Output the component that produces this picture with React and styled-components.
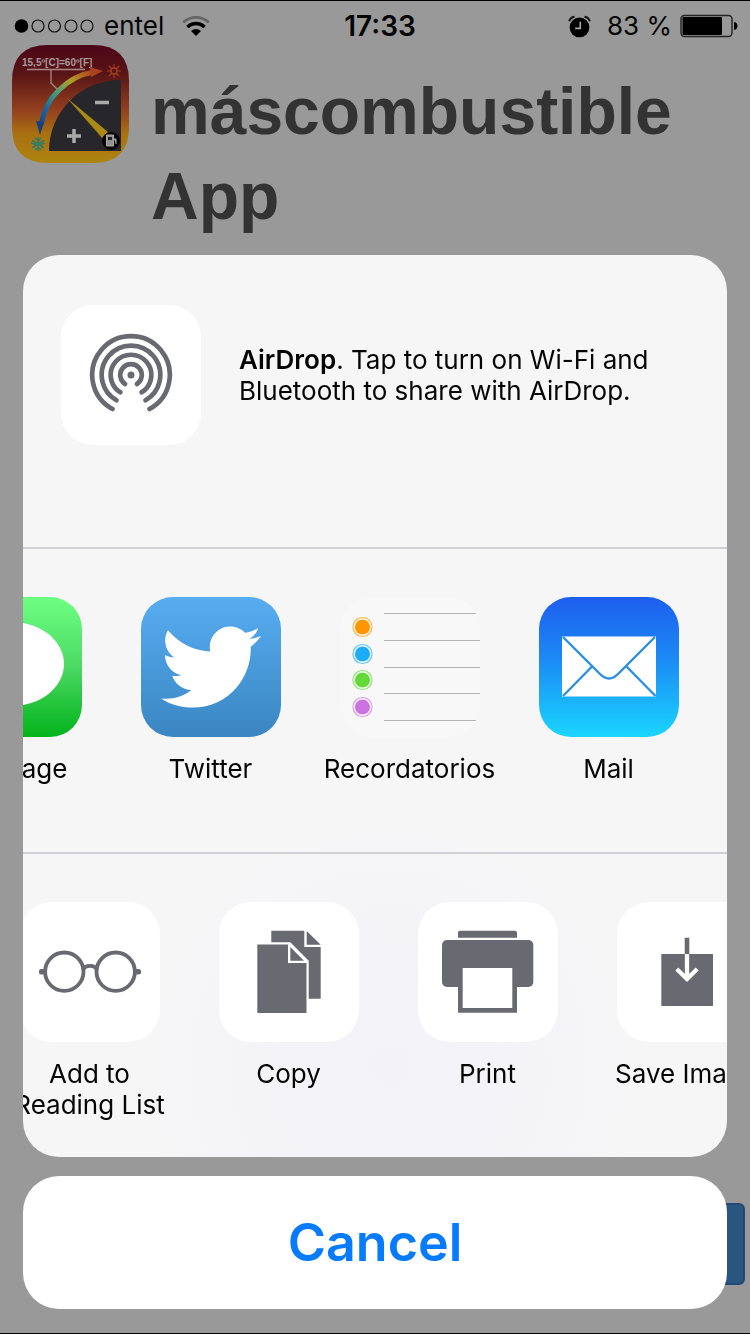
import React from "react";
import styled, { createGlobalStyle } from "styled-components";
import { FaTwitter } from "react-icons/fa";

const INK = "#696972";

const GlobalStyle = createGlobalStyle`
  * { box-sizing: border-box; }
  body {
    margin: 0;
    background: #999;
    color: #050505;
    font-family: Inter, "Liberation Sans", sans-serif;
  }
  button { border: 0; padding: 0; background: none; font: inherit; color: inherit; cursor: pointer; }
  svg { display: block; flex-shrink: 0; }
`;

const Screen = styled.div`
  min-height: 100vh;
  display: flex;
  flex-direction: column;
  background: #999;
  border-top: 1px solid #000;
  border-bottom: 1px solid #000;
`;

const StatusBar = styled.div`
  display: grid;
  grid-template-columns: 41fr auto 40fr;
  align-items: center;
  height: 44px;
  padding: 6px 12px 0 14px;
  font-size: 26px;
  line-height: 32px;
`;

const StatusGroup = styled.div`
  display: flex;
  align-items: center;
  justify-content: ${(p) => (p.$end ? "flex-end" : "flex-start")};
  gap: ${(p) => p.$gap}px;
`;

const Time = styled.time`
  font-size: 28px;
  font-weight: 600;
`;

const PageHeader = styled.header`
  display: flex;
  align-items: flex-start;
  gap: 22px;
  padding: 0 12px;
`;

const Title = styled.h1`
  margin: 24px 0 0;
  font-family: "Liberation Sans", Arial, sans-serif;
  font-size: 66px;
  line-height: 85px;
  font-weight: 700;
  color: #333;
`;

const PageButton = styled.button`
  align-self: flex-end;
  width: 40%;
  height: 82px;
  margin: auto 5px 48px 0;
  border-radius: 6px;
  border: 2px solid #204a72;
  background: #29567f;
`;

const Overlay = styled.div`
  position: fixed;
  inset: 0;
  display: flex;
  flex-direction: column;
  justify-content: flex-end;
  gap: 19px;
  padding: 0 23px 25px;
`;

const Sheet = styled.section`
  overflow: hidden;
  border-radius: 36px;
  background: radial-gradient(circle at 52% 90%, #f2f2f8 0, #f6f6f7 28%);
  font-size: 26px;
  line-height: 31px;
`;

const AirDropButton = styled.button`
  display: flex;
  align-items: center;
  gap: 38px;
  width: 100%;
  padding: 50px 38px 102px;
  text-align: left;
`;

const AirDropText = styled.span`
  max-width: 430px;
`;

const Strong = styled.b`
  font-weight: 600;
`;

const Strip = styled.div`
  overflow: hidden;
  border-top: 2px solid #d0d0d6;
`;

const Track = styled.ul`
  display: flex;
  list-style: none;
  margin: 0 0 0 -${(p) => p.$scrolled}px;
  padding: 48px 0 0;
  min-height: 303px;
`;

const Item = styled.li`
  flex: 0 0 199px;
`;

const ItemButton = styled.button`
  display: flex;
  flex-direction: column;
  align-items: center;
  gap: 16px;
  width: 100%;
`;

const ItemLabel = styled.span`
  max-width: 180px;
  text-align: center;
`;

const Tile = styled.span`
  display: flex;
  align-items: center;
  justify-content: center;
  flex-shrink: 0;
  width: 140px;
  height: 140px;
  border-radius: 32px;
  overflow: hidden;
  background: ${(p) => p.$fill || "#fff"};
`;

const CancelButton = styled.button`
  width: 100%;
  height: 133px;
  border-radius: 36px;
  background: #fff;
  color: #067bfb;
  font-size: 52px;
  font-weight: 600;
`;

const TileArt = ({ children }) => (
  <svg width="140" height="140" viewBox="0 0 140 140" fill="none" aria-hidden="true">
    {children}
  </svg>
);

const SignalDots = () => (
  <svg width="80" height="16" viewBox="0 0 80 16" aria-hidden="true">
    <circle cx="7.5" cy="8" r="6.8" />
    {[24, 40.5, 57, 73].map((x) => (
      <circle key={x} cx={x} cy="8" r="6" fill="none" stroke="#111" strokeWidth="1.2" />
    ))}
  </svg>
);

const Wifi = () => (
  <svg width="28" height="20" viewBox="0 0 28 20" fill="none" aria-hidden="true">
    <path d="M1.2 6.6a18.5 18.5 0 0 1 25.6 0" stroke="#666" strokeWidth="2.8" />
    <path d="M5.4 11a12.4 12.4 0 0 1 17.2 0" stroke="#000" strokeWidth="3.4" />
    <path d="M14 20 9 15a7.4 7.4 0 0 1 10 0Z" fill="#000" />
  </svg>
);

const Alarm = () => (
  <svg width="23" height="23" viewBox="0 0 24 24" fill="none" aria-hidden="true">
    <circle cx="12" cy="13" r="10.300" fill="#000" />
    <path d="M1.2 6.5Q2.5 2.4 6.8 1.8M22.800 6.500Q21.500 2.400 17.200 1.800" stroke="#111" strokeWidth="2" />
    <path d="M12.800 7v7H7.500" stroke="#aaa" strokeWidth="1.700" />
  </svg>
);

const Battery = () => (
  <svg width="58" height="24" viewBox="0 0 58 24" aria-hidden="true">
    <rect x="1" y="1.500" width="51" height="21" rx="3.500" fill="none" stroke="#222" strokeWidth="1.400" />
    <rect x="2.500" y="3" width="39.500" height="18" rx="1" />
    <path d="M54 8q3.500.5 3.500 4T54 16Z" />
  </svg>
);

const AppIcon = () => (
  <svg width="117" height="118" viewBox="0 0 117 118" fill="none" role="img" aria-label="máscombustible">
    <defs>
      <linearGradient id="sky" x1="0" y1="0" x2="0" y2="1">
        <stop offset="0" stopColor="#4c0618" />
        <stop offset="0.250" stopColor="#591516" />
        <stop offset="0.550" stopColor="#93401f" />
        <stop offset="0.750" stopColor="#a97010" />
        <stop offset="1" stopColor="#ad8411" />
      </linearGradient>
      <linearGradient id="arc" x1="28" y1="87" x2="92" y2="27" gradientUnits="userSpaceOnUse">
        <stop offset="0" stopColor="#123f80" />
        <stop offset="0.220" stopColor="#1b62a0" />
        <stop offset="0.420" stopColor="#3d9a83" />
        <stop offset="0.650" stopColor="#b0a02b" />
        <stop offset="0.850" stopColor="#b3541f" />
        <stop offset="1" stopColor="#a83a20" />
      </linearGradient>
    </defs>
    <path d="M0 36Q0 0 36 0H81Q117 0 117 36V82Q117 118 81 118H36Q0 118 0 82Z" fill="url(#sky)" />
    <text x="10" y="21" fontFamily="Liberation Sans, sans-serif" fontSize="10" fontWeight="700" fill="#a9989a">15,5º[C]=60º[F]</text>
    <path d="M15 24.500h58M39 24.500V38l8 8" stroke="#a88a82" strokeWidth="1.300" />
    <path d="M37 106A71 71 0 0 1 109 35V106Z" fill="#27262b" />
    <path d="M29 80Q33 58 47 45 62 30 82 27" stroke="url(#arc)" strokeWidth="5" />
    <path d="M24 76l8 1-4 13Z" fill="#153f7d" />
    <path d="M78 22l13 4-12 6Z" fill="#a64220" />
    <path d="M55 53 96 87 90 93Z" fill="#a98a14" />
    <path d="M55 53 90 93 86 88Z" fill="#7b3b1c" />
    <circle cx="99" cy="96" r="9" fill="#060606" />
    <path d="M94.500 90h7v11h-7ZM102 94h2v5" stroke="#aaa" strokeWidth="1" fill="#929292" />
    <path d="M96 92h4v3h-4Z" fill="#222" />
    <path d="M83 57.500h14M55 91h14M62 84v14" stroke="#aaa" strokeWidth="3.500" />
    <circle cx="102" cy="26" r="3" stroke="#a4401f" strokeWidth="1.300" />
    <path d="M102 19v4M102 29v4M95 26h4M105 26h4M97 21l3 3M104 28l3 3M107 21l-3 3M100 28l-3 3" stroke="#a4401f" strokeWidth="1.200" />
    <path d="M26 92v14M20 95.500l12 7M32 95.500l-12 7M23 93l3 3 3-3M23 105l3-3 3 3M19 98l4 1-1 4M33 98l-4 1 1 4" stroke="#367c62" strokeWidth="1.500" />
  </svg>
);

const AirDropArt = () => (
  <TileArt>
    <g stroke={INK} strokeWidth="4.700" strokeLinecap="round">
      <path d="M51.500 104A38.800 38.800 0 1 1 88.500 104" />
      <path d="M55.400 95.300A29.300 29.300 0 1 1 84.600 95.300" />
      <path d="M59.300 87.300A20.300 20.300 0 1 1 80.700 87.300" />
      <path d="M64 79A10.800 10.800 0 1 1 76 79" />
    </g>
    <circle cx="70" cy="70" r="3.500" fill={INK} />
  </TileArt>
);

const MessageArt = () => (
  <TileArt>
    <ellipse cx="70" cy="67" rx="52" ry="42" fill="#fff" />
    <path d="M38 96q-2 12-12 17 16 0 26-10Z" fill="#fff" />
  </TileArt>
);

const REMINDERS = [
  [30, "#ff9500"],
  [57, "#1badf8"],
  [83, "#63da38"],
  [110, "#cc73e1"],
];

const RemindersArt = () => (
  <TileArt>
    {REMINDERS.map(([y, color]) => (
      <g key={color}>
        <circle cx="22.500" cy={y} r="9.500" stroke={color} strokeOpacity="0.700" strokeWidth="1.200" fill="#fff" />
        <circle cx="22.500" cy={y} r="7.600" fill={color} />
      </g>
    ))}
    <path d="M44 16.500h93M44 43.500h97M44 70.500h97M44 96.500h97M44 123.500h93" stroke="#b2b2b4" strokeWidth="1" />
  </TileArt>
);

const MailArt = () => (
  <TileArt>
    <path d="M23 39.500h94v60H23Z" fill="#fff" />
    <g stroke="#2b90e4" strokeWidth="2.400">
      <path d="M24 40 61 77Q70 86 79 77L116 40" />
      <path d="M53 69.500 24 99M87.500 69.500 116.500 99" />
    </g>
  </TileArt>
);

const GlassesArt = () => (
  <TileArt>
    <g stroke={INK} strokeWidth="3.800">
      <circle cx="44.300" cy="69.700" r="19.200" />
      <circle cx="95.700" cy="69.700" r="19.200" />
      <path d="M63 68Q64.500 63.800 70 63.800T77 68" />
    </g>
    <path d="M21 67h5v5.500h-5a2 2 0 0 1-2-2v-1.500a2 2 0 0 1 2-2ZM119 67h-5v5.500h5a2 2 0 0 0 2-2v-1.500a2 2 0 0 0-2-2Z" fill={INK} />
  </TileArt>
);

const CopyArt = () => (
  <TileArt>
    <g fill={INK}>
      <path d="M38.300 42.500H69V61h18.500v50H38.300Z" />
      <path d="M71.300 45 85 58.700H71.300Z" />
      <path d="M52.300 28.700h33V45h16.400v51.700H89.700v-38L71.300 40.300h-19Z" />
      <path d="M87.700 29l14 13.700h-14Z" />
    </g>
  </TileArt>
);

const PrintArt = () => (
  <TileArt>
    <g fill={INK}>
      <path d="M42 28.700h55a2 2 0 0 1 2 2v5H40v-5a2 2 0 0 1 2-2Z" />
      <rect x="24" y="38" width="91.300" height="47" rx="5" />
      <path d="M40 80h59v30.700H40Z" />
    </g>
    <path d="M44.700 66h49.600v40H44.700Z" fill="#fff" />
  </TileArt>
);

const SaveArt = () => (
  <TileArt>
    <path d="M44.300 52H96v52H44.300ZM67.700 35.700h4.600V52h-4.600Z" fill={INK} />
    <path d="M70 52v25M59.800 67 70 77 80.200 67" stroke="#fff" strokeWidth="4.300" />
  </TileArt>
);

const APPS = [
  { label: "Message", fill: "linear-gradient(#6dff82, #4bd964 50%, #03b31a)", art: <MessageArt /> },
  { label: "Twitter", fill: "linear-gradient(#57adf1, #3a86c2)", art: <FaTwitter size={100} color="#fff" aria-hidden="true" /> },
  { label: "Recordatorios", fill: "#f8f8f8", art: <RemindersArt /> },
  { label: "Mail", fill: "linear-gradient(#1e5eee, #1b8bf5 45%, #1ad5fe)", art: <MailArt /> },
];

const ACTIONS = [
  { label: "Add to Reading List", art: <GlassesArt /> },
  { label: "Copy", art: <CopyArt /> },
  { label: "Print", art: <PrintArt /> },
  { label: "Save Image", art: <SaveArt /> },
];

const ShareStrip = ({ items, scrolled }) => (
  <Strip>
    <Track $scrolled={scrolled}>
      {items.map(({ label, fill, art }) => (
        <Item key={label}>
          <ItemButton type="button">
            <Tile $fill={fill}>{art}</Tile>
            <ItemLabel>{label}</ItemLabel>
          </ItemButton>
        </Item>
      ))}
    </Track>
  </Strip>
);

export default function App() {
  return (
    <>
      <GlobalStyle />
      <Screen>
        <StatusBar>
          <StatusGroup $gap={18}>
            <StatusGroup $gap={10}>
              <SignalDots />
              <span>entel</span>
            </StatusGroup>
            <Wifi />
          </StatusGroup>
          <Time>17:33</Time>
          <StatusGroup $end $gap={16}>
            <Alarm />
            <StatusGroup $gap={8}>
              <span>83 %</span>
              <Battery />
            </StatusGroup>
          </StatusGroup>
        </StatusBar>
        <PageHeader>
          <AppIcon />
          <Title>máscombustible App</Title>
        </PageHeader>
        <PageButton type="button" aria-label="App" />
      </Screen>
      <Overlay>
        <Sheet>
          <AirDropButton type="button">
            <Tile>
              <AirDropArt />
            </Tile>
            <AirDropText>
              <Strong>AirDrop</Strong>. Tap to turn on Wi-Fi and Bluetooth to share with AirDrop.
            </AirDropText>
          </AirDropButton>
          <ShareStrip items={APPS} scrolled={111} />
          <ShareStrip items={ACTIONS} scrolled={33} />
        </Sheet>
        <CancelButton type="button">Cancel</CancelButton>
      </Overlay>
    </>
  );
}
